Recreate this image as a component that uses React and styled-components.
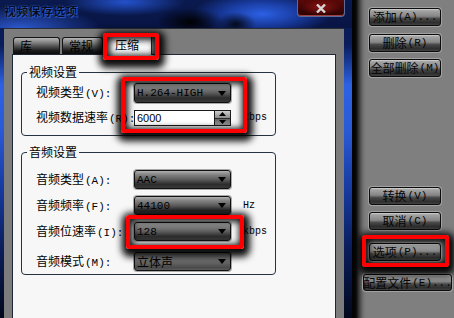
import React from 'react';
import styled, { createGlobalStyle, css } from 'styled-components';

const CJK = `"Noto Sans CJK SC", "Liberation Sans", sans-serif`;
const MONO = `"Liberation Mono", "Noto Sans CJK SC", monospace`;

const GlobalStyle = createGlobalStyle`
  html, body { margin: 0; padding: 0; background: #7f7f7f; }
  body { width: 454px; height: 318px; overflow: hidden; font-family: ${CJK}; }
  * { box-sizing: border-box; }
`;

const Screen = styled.div`
  display: flex;
  width: 454px;
  height: 318px;
  overflow: hidden;
`;

const Window = styled.div`
  flex: none;
  width: 352px;
  display: flex;
  flex-direction: column;
  background: linear-gradient(
    to bottom,
    #0b1a4a 0px,
    #0a1d5c 45px,
    #2c62e2 85px,
    #2a5ad6 130px,
    #163a9e 190px,
    #0a1d5a 250px,
    #03081c 318px
  );
`;

const TitleBar = styled.div`
  flex: none;
  height: 28px;
  display: flex;
  justify-content: space-between;
  align-items: flex-start;
  padding-right: 7px;
  background:
    radial-gradient(34px 14px at 190px 22px, rgba(0, 0, 0, 0.95), transparent),
    radial-gradient(20px 12px at 236px 24px, rgba(0, 0, 0, 0.8), transparent),
    radial-gradient(70px 22px at 262px 14px, #2c60e4 0%, rgba(34, 80, 210, 0.6) 55%, transparent 100%),
    radial-gradient(60px 14px at 125px 2px, #2452cc, transparent),
    radial-gradient(80px 22px at 20px 28px, #2c58cc, transparent),
    linear-gradient(#0a1a4e, #081444);
`;

const Title = styled.div`
  margin: 4px 0 0 4px;
  font: bold 12px/14px ${CJK};
  letter-spacing: 0.3px;
  color: #050c22;
  text-shadow: 0 0 1px #4a7af0, 1px 1px 1px #2a58d0;
`;

const CloseButton = styled.div`
  width: 48px;
  height: 17px;
  display: flex;
  align-items: center;
  justify-content: center;
  border: 1px solid #5d6b96;
  border-top: none;
  border-radius: 0 0 4px 4px;
  background:
    radial-gradient(20px 8px at 50% 45%, #8a1414, transparent),
    linear-gradient(#5a0808, #2a0202);
  box-shadow: inset 0 -1px 0 #a04040;
`;

const Body = styled.div`
  flex: 1;
  display: flex;
  flex-direction: column;
  margin: 0 8px 0 4px;
  background: #7c7c7c;
  border-top: 1px solid #2a2e36;
`;

const TabStrip = styled.div`
  flex: none;
  display: flex;
  align-items: flex-end;
  gap: 2px;
  height: 25px;
  padding: 0 0 0 9px;
`;

const Tab = styled.div`
  position: relative;
  width: ${(p) => p.$w}px;
  height: 17px;
  padding-left: 6px;
  font: 12px/15px ${CJK};
  color: #000;
  border: 1px solid #151515;
  border-bottom: none;
  border-radius: 3px 3px 0 0;
  background: linear-gradient(#b4b4b4 0%, #8a8a8a 25%, #4a4a4a 55%, #1a1a1a 80%, #0c0c0c 100%);
  ${(p) =>
    p.$active &&
    css`
      height: 21px;
      margin-bottom: -1px;
      padding-left: 9px;
      padding-top: 2px;
      background: #f7f7f7;
      border-color: #1e2836;
      z-index: 1;
    `}
`;

const Annotation = styled.span`
  position: absolute;
  top: ${(p) => p.$t}px;
  left: ${(p) => p.$l}px;
  width: ${(p) => p.$w}px;
  height: ${(p) => p.$h}px;
  border: 4px solid #ff0000;
  border-radius: 3px;
  pointer-events: none;
  z-index: 5;
  box-shadow: 1px 3px 7px 5px rgba(0, 0, 0, 0.95), inset 1px 1px 6px 2px rgba(0, 0, 0, 0.9);
`;

const Panel = styled.div`
  flex: 1;
  margin: 0 8px;
  padding: 10px 0 0 8px;
  display: flex;
  flex-direction: column;
  align-items: flex-start;
  background: #f7f7f7;
  border: 1px solid #1e2836;
  border-bottom: none;
`;

const Group = styled.fieldset`
  width: 255px;
  min-width: 0;
  margin: ${(p) => p.$mt || 0}px 0 0 0;
  padding: 0;
  border: 1px solid #26323f;
  border-radius: 4px;
`;

const Legend = styled.legend`
  margin-left: 5px;
  padding: 0 2px;
  font: 12px/14px ${CJK};
  color: #000;
`;

const Rows = styled.div`
  position: relative;
  display: flex;
  flex-direction: column;
  padding: ${(p) => p.$pt}px 0 ${(p) => p.$pb}px 14px;
`;

const FieldRow = styled.div`
  position: relative;
  display: grid;
  grid-template-columns: 98px 97px auto;
  align-items: center;
  height: ${(p) => p.$h}px;
  margin-top: ${(p) => p.$mt || 0}px;
`;

const Label = styled.span`
  font: 12px/14px ${CJK};
  color: #000;
  white-space: nowrap;
`;

const Acc = styled.span`
  font: 11px/14px ${MONO};
  margin-left: 1px;
`;

const Combo = styled.div`
  height: 100%;
  display: flex;
  align-items: center;
  justify-content: space-between;
  padding: 0 4px 0 2px;
  border: 1px solid #101010;
  border-radius: 3px;
  box-shadow: 0 0 0 1px #a9a9a9;
  color: #000;
  font: ${(p) => (p.$cjk ? `12px/14px ${CJK}` : `11px/14px ${MONO}`)};
  background: ${(p) =>
    p.$light
      ? 'linear-gradient(#b8b8b8 0%, #8e8e8e 20%, #6a6a6a 55%, #4a4a4a 85%, #5a5a5a 100%)'
      : 'linear-gradient(#b0b0b0 0%, #858585 20%, #5c5c5c 50%, #2c2c2c 78%, #383838 100%)'};
`;

const TextInput = styled.div`
  height: 100%;
  display: flex;
  align-items: center;
  justify-content: space-between;
  padding-left: 2px;
  border: 1px solid #1a1a1a;
  background: #ffffff;
  font: 11px/14px "Liberation Sans", sans-serif;
  color: #000;
`;

const Spin = styled.div`
  width: 16px;
  height: 100%;
  display: flex;
  flex-direction: column;
  border-left: 1px solid #1a1a1a;
  background: linear-gradient(#d0d0d0, #8a8a8a 50%, #5a5a5a 52%, #9a9a9a);
`;

const SpinHalf = styled.div`
  flex: 1;
  display: flex;
  align-items: center;
  justify-content: center;
  & + & { border-top: 1px solid #2a2a2a; }
`;

const Unit = styled.span`
  margin-left: 12px;
  font: 10px/14px ${MONO};
  color: #000;
`;

const SidePanel = styled.div`
  flex: 1;
  display: flex;
  flex-direction: column;
  align-items: flex-start;
  padding: 8px 0 0 17px;
  background: linear-gradient(to right, #030303 0px, #080808 4px, #4a4a4a 8px, #707070 11px, #7f7f7f 14px);
`;

const Button = styled.div`
  position: relative;
  width: ${(p) => (p.$wide ? 89 : 72)}px;
  height: ${(p) => (p.$wide ? 17 : 18)}px;
  margin-top: ${(p) => p.$mt || 0}px;
  margin-left: ${(p) => (p.$wide ? -6 : 0)}px;
  display: flex;
  align-items: center;
  justify-content: center;
  white-space: nowrap;
  border: 1px solid #0c0c0c;
  border-radius: 3px;
  box-shadow: 0 0 0 1px #a2a2a2;
  font: 12px/14px ${CJK};
  color: #050505;
  background: linear-gradient(#d6d6d6 0%, #a4a4a4 10%, #868686 45%, #484848 60%, #2e2e2e 85%, #424242 100%);
`;

const Arrow = () => (
  <svg width="8" height="5" viewBox="0 0 8 5">
    <path d="M0 0 L8 0 L4 5 Z" fill="#000" />
  </svg>
);

const SmallTri = ({ up }) => (
  <svg width="7" height="4" viewBox="0 0 7 4">
    <path d={up ? 'M0 4 L7 4 L3.5 0 Z' : 'M0 0 L7 0 L3.5 4 Z'} fill="#000" />
  </svg>
);

export default function App() {
  return (
    <>
      <GlobalStyle />
      <Screen>
        <Window>
          <TitleBar>
            <Title>视频保存选项</Title>
            <CloseButton>
              <svg width="10" height="9" viewBox="0 0 10 9">
                <path d="M1 0.5 L9 8.5 M9 0.5 L1 8.5" stroke="#d8d8d8" strokeWidth="2.4" />
              </svg>
            </CloseButton>
          </TitleBar>
          <Body>
            <TabStrip>
              <Tab $w={47}>库</Tab>
              <Tab $w={41}>常规</Tab>
              <Tab $w={47} $active>
                压缩
                <Annotation $t={-2} $l={-3} $w={56} $h={27} />
              </Tab>
            </TabStrip>
            <Panel>
              <Group>
                <Legend>视频设置</Legend>
                <Rows $pt={4} $pb={9}>
                  <FieldRow $h={20}>
                    <Label>
                      视频类型<Acc>(V):</Acc>
                    </Label>
                    <Combo>
                      H.264-HIGH
                      <Arrow />
                    </Combo>
                  </FieldRow>
                  <FieldRow $h={16} $mt={7}>
                    <Label>
                      视频数据速率<Acc>(R):</Acc>
                    </Label>
                    <TextInput>
                      6000
                      <Spin>
                        <SpinHalf>
                          <SmallTri up />
                        </SpinHalf>
                        <SpinHalf>
                          <SmallTri />
                        </SpinHalf>
                      </Spin>
                    </TextInput>
                    <Unit>kbps</Unit>
                  </FieldRow>
                  <Annotation $t={-2} $l={99} $w={126} $h={56} />
                </Rows>
              </Group>
              <Group $mt={9}>
                <Legend>音频设置</Legend>
                <Rows $pt={11} $pb={3}>
                  <FieldRow $h={19}>
                    <Label>
                      音频类型<Acc>(A):</Acc>
                    </Label>
                    <Combo>
                      AAC
                      <Arrow />
                    </Combo>
                  </FieldRow>
                  <FieldRow $h={19} $mt={7}>
                    <Label>
                      音频频率<Acc>(F):</Acc>
                    </Label>
                    <Combo>
                      44100
                      <Arrow />
                    </Combo>
                    <Unit>Hz</Unit>
                  </FieldRow>
                  <FieldRow $h={19} $mt={7}>
                    <Label>
                      音频位速率<Acc>(I):</Acc>
                    </Label>
                    <Combo>
                      128
                      <Arrow />
                    </Combo>
                    <Unit>kbps</Unit>
                    <Annotation $t={-7} $l={90} $w={118} $h={34} />
                  </FieldRow>
                  <FieldRow $h={19} $mt={11}>
                    <Label>
                      音频模式<Acc>(M):</Acc>
                    </Label>
                    <Combo $light $cjk>
                      立体声
                      <Arrow />
                    </Combo>
                  </FieldRow>
                </Rows>
              </Group>
            </Panel>
          </Body>
        </Window>
        <SidePanel>
          <Button>
            添加<Acc>(A)...</Acc>
          </Button>
          <Button $mt={8}>
            删除<Acc>(R)</Acc>
          </Button>
          <Button $mt={7}>
            全部删除<Acc>(M)</Acc>
          </Button>
          <Button $mt={110}>
            转换<Acc>(V)</Acc>
          </Button>
          <Button $mt={7}>
            取消<Acc>(C)</Acc>
          </Button>
          <Button $mt={13}>
            选项<Acc>(P)...</Acc>
            <Annotation $t={-9} $l={-8} $w={87} $h={32} />
          </Button>
          <Button $mt={13} $wide>
            配置文件<Acc>(E)...</Acc>
          </Button>
        </SidePanel>
      </Screen>
    </>
  );
}
